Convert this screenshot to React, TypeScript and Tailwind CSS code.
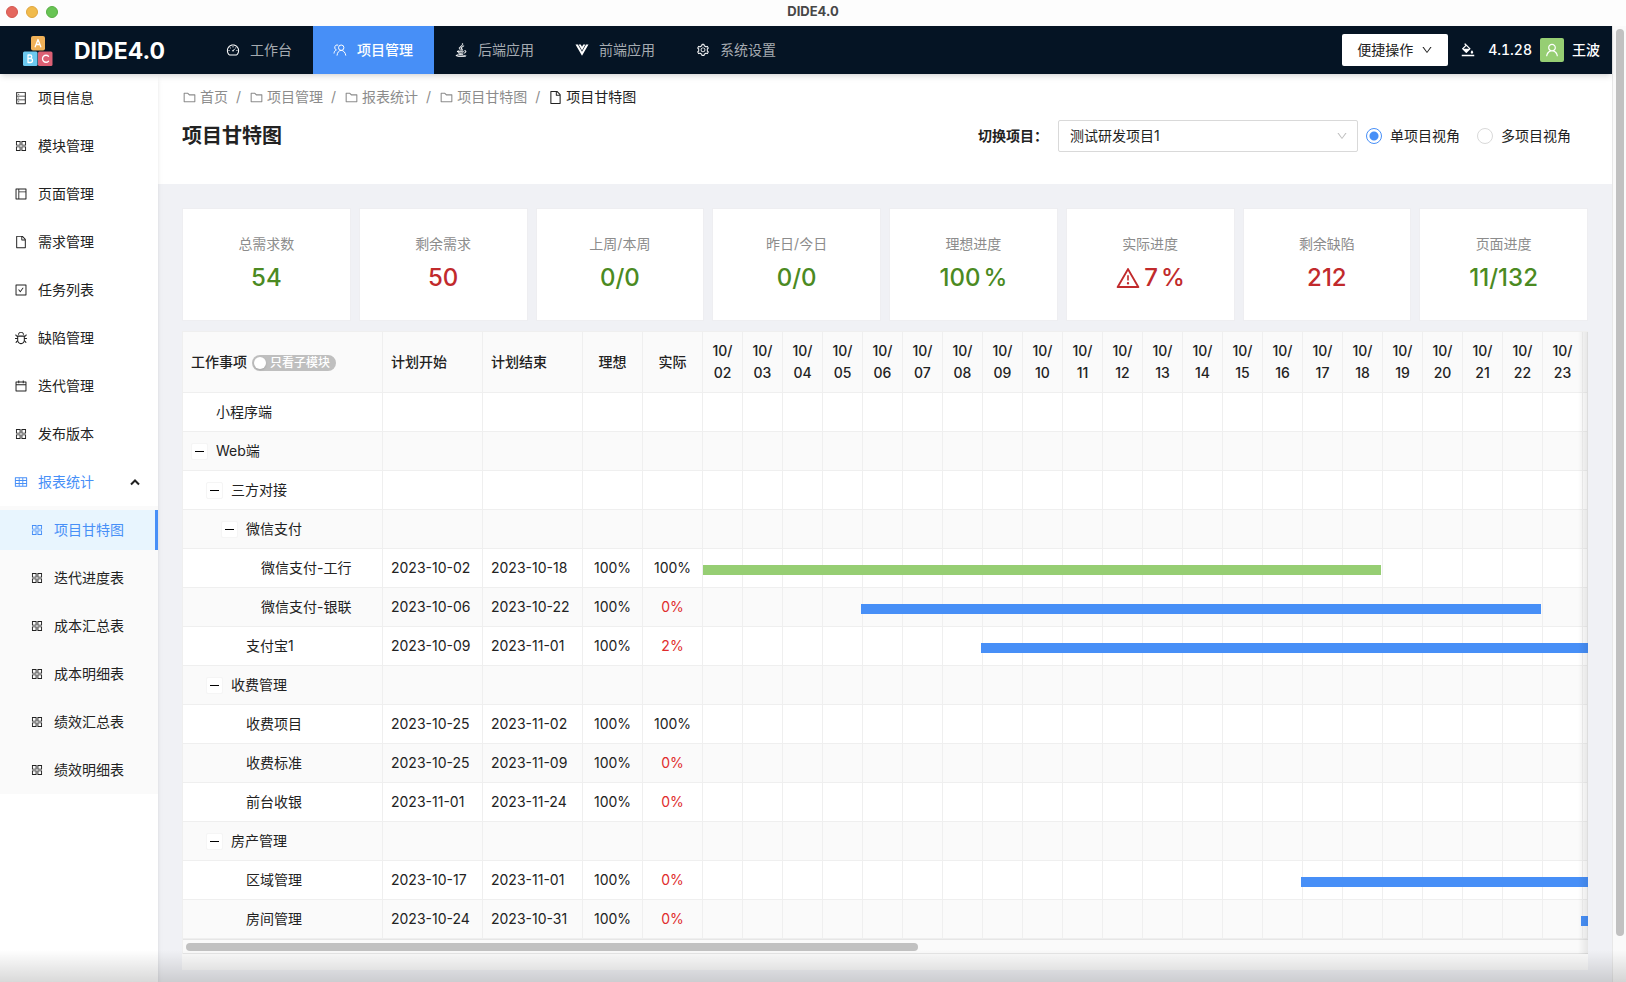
import React, { useState } from 'react';
import {
  AiOutlineAppstore,
  AiOutlineBgColors,
  AiOutlineBug,
  AiOutlineCalendar,
  AiOutlineCheckSquare,
  AiOutlineDashboard,
  AiOutlineDatabase,
  AiOutlineDown,
  AiOutlineFile,
  AiOutlineFolder,
  AiOutlineLayout,
  AiOutlineSetting,
  AiOutlineTable,
  AiOutlineUser,
  AiOutlineWarning,
} from 'react-icons/ai';
import { FaJava } from 'react-icons/fa';
import clsx from 'clsx';

type IconType = React.ComponentType<{ className?: string }>;

const UsersIcon: IconType = ({ className }) => (
  <svg viewBox="0 0 14 14" className={className} fill="none" stroke="currentColor" strokeWidth="1">
    <path d="M1 10.5c.2-2 1-3 2.400-3.600A2.500 2.500 0 0 1 5.200 2.100" />
    <circle cx="8.200" cy="4.700" r="2.700" />
    <path d="M4 12.600c.3-3.200 2-5.200 4.200-5.200s4.200 2 4.600 5.200" />
  </svg>
);

const VueIcon: IconType = ({ className }) => (
  <svg viewBox="0 0 14 14" className={className} fill="currentColor">
    <path d="M.5 1.500h2.400L7 8.700l4.100-7.200h2.400L7 12.700z" />
    <path d="M3.600 1.500h2.100L7 3.800l1.300-2.300h2.100L7 7.500z" />
  </svg>
);

const CaretUpIcon: IconType = ({ className }) => (
  <svg viewBox="0 0 10 10" className={className} fill="none" stroke="currentColor" strokeWidth="2">
    <path d="M1 7.500 5 3.500 9 7.500" />
  </svg>
);

const Logo = () => (
  <svg viewBox="0 0 30 30" className="size-[30px]" fill="none" strokeLinecap="round" strokeLinejoin="round">
    <rect x="8" y="0" width="14" height="14.500" rx="2" fill="#f0b158" />
    <path d="M12.200 10.800 15 3.500l2.800 7.300M13.200 8.500h3.600" stroke="#fff" strokeWidth="1.300" />
    <rect x="0" y="15.500" width="14.500" height="14.500" rx="1.500" fill="#6cc9f0" />
    <path d="M5 19v7.500h2.500a2 2 0 0 0 0-4H5m0 0h2a1.750 1.750 0 0 0 0-3.500H5" stroke="#fff" strokeWidth="1.300" />
    <rect x="15" y="15.500" width="14.500" height="14.500" rx="1.500" fill="#dc6074" />
    <path d="M25.500 20.300a3.500 3.500 0 1 0 0 4.900" stroke="#fff" strokeWidth="1.300" />
  </svg>
);

const navItems: { label: string; icon: IconType; active?: boolean }[] = [
  { label: '工作台', icon: AiOutlineDashboard },
  { label: '项目管理', icon: UsersIcon, active: true },
  { label: '后端应用', icon: FaJava },
  { label: '前端应用', icon: VueIcon },
  { label: '系统设置', icon: AiOutlineSetting },
];

const sideItems: { label: string; icon: IconType }[] = [
  { label: '项目信息', icon: AiOutlineDatabase },
  { label: '模块管理', icon: AiOutlineAppstore },
  { label: '页面管理', icon: AiOutlineLayout },
  { label: '需求管理', icon: AiOutlineFile },
  { label: '任务列表', icon: AiOutlineCheckSquare },
  { label: '缺陷管理', icon: AiOutlineBug },
  { label: '迭代管理', icon: AiOutlineCalendar },
  { label: '发布版本', icon: AiOutlineAppstore },
];

const reportItems = ['项目甘特图', '迭代进度表', '成本汇总表', '成本明细表', '绩效汇总表', '绩效明细表'];

const crumbs = ['首页', '项目管理', '报表统计', '项目甘特图'];

interface Stat {
  label: string;
  value: string;
  suffix?: string;
  bad?: boolean;
  warning?: boolean;
}

const stats: Stat[] = [
  { label: '总需求数', value: '54' },
  { label: '剩余需求', value: '50', bad: true },
  { label: '上周/本周', value: '0/0' },
  { label: '昨日/今日', value: '0/0' },
  { label: '理想进度', value: '100', suffix: '%' },
  { label: '实际进度', value: '7', suffix: '%', bad: true, warning: true },
  { label: '剩余缺陷', value: '212', bad: true },
  { label: '页面进度', value: '11/132' },
];

interface Task {
  name: string;
  level: number;
  group?: boolean;
  start?: string;
  end?: string;
  ideal?: string;
  actual?: string;
}

const tasks: Task[] = [
  { name: '小程序端', level: 0 },
  { name: 'Web端', level: 0, group: true },
  { name: '三方对接', level: 1, group: true },
  { name: '微信支付', level: 2, group: true },
  { name: '微信支付-工行', level: 3, start: '2023-10-02', end: '2023-10-18', ideal: '100%', actual: '100%' },
  { name: '微信支付-银联', level: 3, start: '2023-10-06', end: '2023-10-22', ideal: '100%', actual: '0%' },
  { name: '支付宝1', level: 2, start: '2023-10-09', end: '2023-11-01', ideal: '100%', actual: '2%' },
  { name: '收费管理', level: 1, group: true },
  { name: '收费项目', level: 2, start: '2023-10-25', end: '2023-11-02', ideal: '100%', actual: '100%' },
  { name: '收费标准', level: 2, start: '2023-10-25', end: '2023-11-09', ideal: '100%', actual: '0%' },
  { name: '前台收银', level: 2, start: '2023-11-01', end: '2023-11-24', ideal: '100%', actual: '0%' },
  { name: '房产管理', level: 1, group: true },
  { name: '区域管理', level: 2, start: '2023-10-17', end: '2023-11-01', ideal: '100%', actual: '0%' },
  { name: '房间管理', level: 2, start: '2023-10-24', end: '2023-10-31', ideal: '100%', actual: '0%' },
];

const DAY_WIDTH = 40;
const DAY_MS = 86400000;
const FIRST_DAY = Date.parse('2023-10-02');

// days scrolled into view; the trailing column takes the space that is left
const days = Array.from({ length: 22 }, (_, i) => {
  const [, month, day] = new Date(FIRST_DAY + i * DAY_MS).toISOString().slice(0, 10).split('-');
  return { month, day };
});

const indents = ['pl-2', 'pl-[23px]', 'pl-[38px]', 'pl-[53px]'];

const barStyle = (task: Task) => {
  const from = (Date.parse(task.start!) - FIRST_DAY) / DAY_MS;
  const to = (Date.parse(task.end!) - FIRST_DAY) / DAY_MS + 1;
  const left = Math.max(0, from * DAY_WIDTH - 2);
  return { left, width: to * DAY_WIDTH - 2 - left };
};

const TitleBar = () => (
  <div className="relative flex h-[26px] justify-center bg-[#fdfdfd]">
    <div className="absolute top-1.5 left-1.5 flex gap-2">
      <span className="size-3 rounded-full border border-[#d5574f] bg-[#e4675e]" />
      <span className="size-3 rounded-full border border-[#e0a63e] bg-[#f1bb4c]" />
      <span className="size-3 rounded-full border border-[#58ae45] bg-[#68c454]" />
    </div>
    <span className="text-[13px] font-bold text-[#474747]">DIDE4.0</span>
  </div>
);

const Header = () => (
  <header className="relative z-10 flex h-12 items-center bg-[#051424] pr-3 pl-[23px] text-white shadow-md shadow-black/10">
    <div className="flex w-[183px] items-center gap-[21px] pt-0.5">
      <Logo />
      <h1 className="text-[23px] font-bold">DIDE4.0</h1>
    </div>
    <nav className="flex h-full">
      {navItems.map(({ label, icon: Icon, active }) => (
        <a
          key={label}
          href="#"
          className={clsx(
            'flex items-center gap-2.5 pr-[21px] pl-5',
            active ? 'bg-[#478ff7] font-medium text-white' : 'text-[#a5abb1]',
          )}
        >
          <Icon className={clsx('size-3.5 text-white', Icon === FaJava && 'stroke-[16]')} />
          {label}
        </a>
      ))}
    </nav>
    <div className="ml-auto flex items-center">
      <button className="flex h-8 items-center gap-2 rounded-xs bg-white px-[15px] text-[#222]">
        便捷操作
        <AiOutlineDown className="size-3" />
      </button>
      <AiOutlineBgColors className="ml-3 size-4" />
      <span className="ml-3 font-medium tabular-nums">4.1.28</span>
      <span className="mx-2 flex size-6 items-center justify-center rounded-xs bg-[#96ce73]">
        <AiOutlineUser className="size-4" />
      </span>
      <span className="font-medium">王波</span>
    </div>
  </header>
);

const Sidebar = () => (
  <aside className="relative w-[158px] shrink-0 bg-white shadow-md shadow-black/10">
    <ul className="flex flex-col">
      {sideItems.map(({ label, icon: Icon }) => (
        <li key={label} className="my-1">
          <a href="#" className="flex h-10 items-center gap-2.5 pl-3.5">
            <Icon className="size-3.5" />
            {label}
          </a>
        </li>
      ))}
      <li className="pt-1">
        <button className="flex h-10 w-full items-center gap-2.5 pr-[18px] pl-3.5 text-[#478ff7]">
          <AiOutlineTable className="size-3.5" />
          报表统计
          <CaretUpIcon className="ml-auto size-2.5 text-[#222]" />
        </button>
        <ul className="mt-1 flex flex-col bg-[#fafafa]">
          {reportItems.map((label, i) => (
            <li key={label} className="my-1">
              <a
                href="#"
                className={clsx(
                  'flex h-10 items-center gap-2.5 pl-[30px]',
                  i === 0 && 'border-r-3 border-[#478ff7] bg-[#e8f5fe] text-[#478ff7]',
                )}
              >
                <AiOutlineAppstore className="size-3.5" />
                {label}
              </a>
            </li>
          ))}
        </ul>
      </li>
    </ul>
  </aside>
);

const PageHeader = () => {
  const [view, setView] = useState('单项目视角');

  return (
    <div className="bg-white px-6 pt-3 pb-8">
      <nav className="flex items-center text-[#8c8c8c]">
        {crumbs.map((crumb) => (
          <React.Fragment key={crumb}>
            <a href="#" className="flex items-center gap-[3px]">
              <AiOutlineFolder className="size-[15px]" />
              {crumb}
            </a>
            <span className="mx-2">/</span>
          </React.Fragment>
        ))}
        <span className="flex items-center gap-[3px] text-[#222]">
          <AiOutlineFile className="size-[15px]" />
          项目甘特图
        </span>
      </nav>
      <div className="mt-3 flex h-8 items-center">
        <h2 className="text-xl font-bold">项目甘特图</h2>
        <div className="ml-auto flex items-center pr-[17px]">
          <label htmlFor="project" className="mr-2.5 font-bold">
            切换项目：
          </label>
          <div className="relative">
            <select
              id="project"
              className="h-8 w-[300px] appearance-none rounded-xs border border-[#d9d9d9] bg-white px-[11px]"
            >
              <option>测试研发项目1</option>
            </select>
            <AiOutlineDown className="pointer-events-none absolute top-2.5 right-2.5 size-3 text-[#bfbfbf]" />
          </div>
          {['单项目视角', '多项目视角'].map((label) => (
            <label key={label} className="ml-2 flex items-center gap-2 not-last:mr-[9px]">
              <input
                type="radio"
                name="view"
                checked={view === label}
                onChange={() => setView(label)}
                className="size-4 appearance-none rounded-full border border-[#d9d9d9] bg-white checked:border-[#478ff7] checked:bg-[radial-gradient(#478ff7_4px,#fff_5px)]"
              />
              {label}
            </label>
          ))}
        </div>
      </div>
    </div>
  );
};

const StatCard: React.FC<{ stat: Stat }> = ({ stat }) => (
  <div className="flex h-[113px] flex-col items-center border border-[#eeeef1] bg-white pt-6">
    <div className="text-[#8c8c8c]">{stat.label}</div>
    <div
      className={clsx(
        'mt-1 flex items-center gap-[3px] text-2xl leading-[38px] font-medium',
        stat.bad ? 'text-[#c12a2c]' : 'text-[#4b8a22]',
      )}
    >
      <span className="flex items-center gap-[3px]">
        {stat.warning && <AiOutlineWarning className="size-[26px]" />}
        {stat.value}
      </span>
      {stat.suffix && <span>{stat.suffix}</span>}
    </div>
  </div>
);

const TaskRow: React.FC<{ task: Task }> = ({ task }) => (
  <tr className="h-[39px] even:bg-[#fafafa] [&>td]:border-r [&>td]:border-b [&>td]:border-[#efefef]">
    <td>
      <div className={clsx('flex items-center gap-2', indents[task.level])}>
        {task.group ? (
          <button
            aria-label={task.name}
            className="flex size-[17px] items-center justify-center rounded-xs border border-[#f5f5f5] bg-white"
          >
            <span className="h-px w-[9px] bg-black" />
          </button>
        ) : (
          <span className="size-[17px]" />
        )}
        {task.name}
      </div>
    </td>
    <td className="pl-2">{task.start}</td>
    <td className="pl-2">{task.end}</td>
    <td className="text-center">{task.ideal}</td>
    <td className={clsx('text-center', task.actual !== '100%' && 'text-[#e02c2c]')}>{task.actual}</td>
    {days.map((d, i) => (
      <td key={d.month + d.day} className="relative">
        {i === 0 && task.start && (
          <div
            className={clsx(
              'absolute top-4 z-1 h-2.5',
              task.actual === '100%' ? 'bg-[#96ce73]' : 'bg-[#478ff7]',
            )}
            style={barStyle(task)}
          />
        )}
      </td>
    ))}
    <td />
  </tr>
);

const GanttTable = () => (
  <div className="relative mt-2.5 overflow-hidden border-t border-l border-[#efefef] bg-[#fafafa]">
    <div className="overflow-hidden">
      <table className="w-full table-fixed border-separate border-spacing-0 bg-white">
        <colgroup>
          <col className="w-[200px]" />
          <col className="w-[100px]" />
          <col className="w-[100px]" />
          <col className="w-[60px]" />
          <col className="w-[60px]" />
          {days.map((d) => (
            <col key={d.month + d.day} className="w-10" />
          ))}
          <col />
        </colgroup>
        <thead>
          <tr className="h-[61px] bg-[#fafafa] [&>th]:border-r [&>th]:border-b [&>th]:border-[#efefef] [&>th]:font-medium">
            <th className="pl-2">
              <div className="flex items-center gap-[5px]">
                工作事项
                <button
                  role="switch"
                  aria-checked="false"
                  className="mt-0.5 flex h-4 items-center gap-1 rounded-full bg-[#bfbfbf] pr-1.5 pl-0.5 text-xs text-white"
                >
                  <span className="size-3 rounded-full bg-white shadow-sm" />
                  只看子模块
                </button>
              </div>
            </th>
            <th className="pl-2 text-left">计划开始</th>
            <th className="pl-2 text-left">计划结束</th>
            <th>理想</th>
            <th>实际</th>
            {days.map((d) => (
              <th key={d.month + d.day}>
                {d.month}/<br />
                {d.day}
              </th>
            ))}
            <th />
          </tr>
        </thead>
        <tbody>
          {tasks.map((task) => (
            <TaskRow key={task.name} task={task} />
          ))}
        </tbody>
      </table>
    </div>
    <div className="h-[15px] border-y border-[#e6e6e6] px-[3px] py-[3px]">
      <div className="h-2 w-[732px] rounded-full bg-[#c1c1c1]" />
    </div>
    <div className="absolute top-0 right-0 bottom-0 z-2 w-2.5 bg-linear-to-r from-transparent to-black/8" />
  </div>
);

export default function App() {
  return (
    <div className="relative flex min-h-screen flex-col overflow-hidden bg-white font-['Inter','Noto_Sans_CJK_SC',sans-serif] text-sm leading-[22px] text-[#222]">
      <TitleBar />
      <div className="flex grow">
        <div className="flex min-w-0 grow flex-col">
          <Header />
          <div className="flex grow">
            <Sidebar />
            <main className="min-w-0 grow bg-[#f0f1f5]">
              <PageHeader />
              <div className="px-6 pt-6">
                <div className="grid grid-cols-8 gap-2">
                  {stats.map((stat) => (
                    <StatCard key={stat.label} stat={stat} />
                  ))}
                </div>
                <GanttTable />
                <div className="h-4 bg-[#fafafa]" />
              </div>
            </main>
          </div>
        </div>
        <div className="w-3.5 shrink-0 border-l border-[#e8e8e8] bg-[#fafafa] px-[3px] pt-[3px] pb-[46px]">
          <div className="h-full w-2 rounded-full bg-[#c1c1c1]" />
        </div>
      </div>
      <div className="pointer-events-none absolute inset-x-0 bottom-0 z-20 h-8 bg-linear-to-b from-transparent to-black/15" />
    </div>
  );
}
